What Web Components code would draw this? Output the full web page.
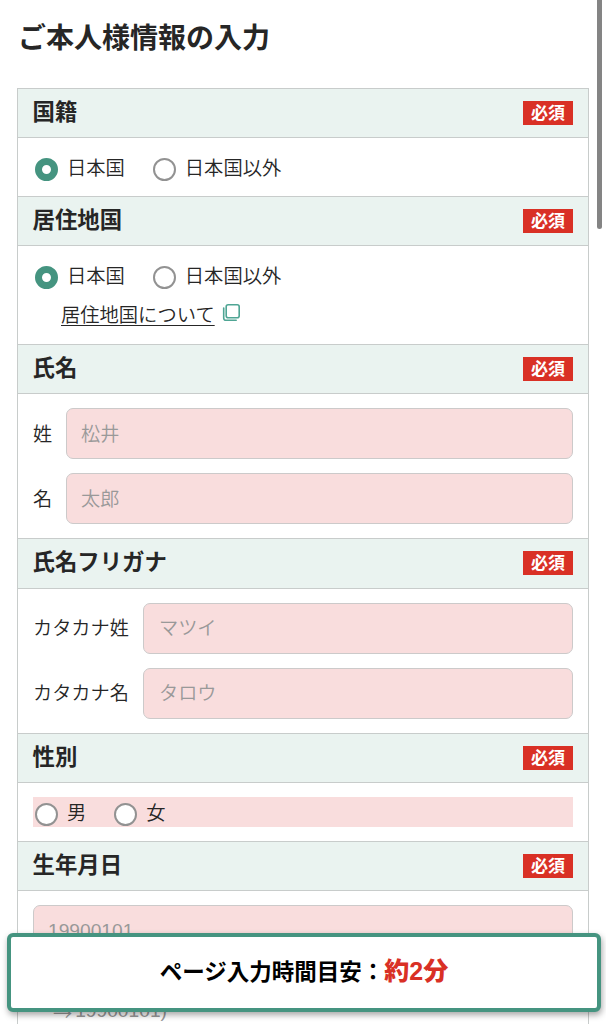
<!DOCTYPE html>
<html lang="ja">
<head>
<meta charset="utf-8">
<title>ご本人様情報の入力</title>
<style>
html,body{margin:0;height:1024px;overflow:hidden;background:#fff}
body{font-family:"Liberation Sans","Noto Sans CJK JP",sans-serif;color:#262626}
</style>
</head>
<body>
<entry-page></entry-page>
<script>
const define = (name, html) => customElements.define(name, class extends HTMLElement {
  constructor() {
    super();
    const t = document.createElement('template');
    t.innerHTML = html;
    this.attachShadow({mode: 'open'}).append(t.content.cloneNode(true));
  }
});

define('required-badge', `<style>
:host{display:flex;align-items:center;justify-content:center;width:50px;height:24px;box-sizing:border-box;padding-top:2px;margin-bottom:1px;background:#d93025;color:#fff;font-size:17px;font-weight:700;line-height:22px}
</style><span>必須</span>`);

define('form-section', `<style>
:host{display:flex;flex-direction:column;height:var(--h);box-sizing:border-box}
header{display:flex;justify-content:space-between;align-items:center;flex:none;height:var(--head,49px);box-sizing:border-box;border-top:1px solid #c8cccb;background:#eaf3f0;padding:0 15px 0 14.5px}
h2{margin:0 0 1px;font-size:22.4px;line-height:30px;font-weight:700}
.body{flex:1;min-height:0;border-top:1px solid #c8cccb;padding:14px 15px 0;box-sizing:border-box}
</style><header><h2><slot name="title"></slot></h2><required-badge></required-badge></header><div class="body"><slot></slot></div>`);

define('radio-group', `<style>
:host{display:flex;align-items:center;height:30px;gap:28px;padding-left:2px;box-sizing:border-box}
:host([missing]){background:#f9dddd}
</style><slot></slot>`);

define('radio-option', `<style>
:host{display:flex;align-items:center;gap:9px;font-size:19.3px;line-height:28px;font-weight:350}
i{width:23px;height:23px;box-sizing:border-box;border:2px solid #929292;border-radius:50%;background:#fff;margin-top:4px}
:host([checked]) i{border:7px solid #459480}
span{padding-top:3px}
</style><i></i><span><slot></slot></span>`);

define('help-link', `<style>
:host{display:flex;align-items:flex-start;gap:7px;padding-left:28px;margin-top:12px;font-size:19.3px;line-height:28px;font-weight:350}
a{color:inherit;text-decoration:underline;text-decoration-thickness:1px;text-underline-offset:3px}
svg{display:block;margin-top:1px}
</style><a><slot></slot></a><svg width="19" height="20" viewBox="0 0 19 20" fill="none" stroke="#4fa594" stroke-width="1.6"><rect x="4.2" y="1.8" width="13" height="13" rx="2"/><path d="M1.7 5v9.9q0 2.3 2.3 2.3h10.2" stroke-linecap="round"/></svg>`);

define('text-field', `<style>
:host{display:flex;align-items:center;font-size:19.2px;font-weight:350;height:51px;margin-bottom:14px}
label{flex:none;width:var(--label,33px);line-height:28px;padding-top:var(--drop,2px)}
div{flex:1;height:51px;box-sizing:border-box;border:1px solid #cccaca;border-radius:7px;background:#f9dddd;color:#999;padding:0 var(--inset,14px);line-height:var(--line,51px)}
</style><label><slot name="label"></slot></label><div><slot></slot></div>`);

define('time-notice', `<style>
:host{position:absolute;left:7px;top:933px;width:594px;height:79px;box-sizing:border-box;border:4px solid #459480;border-radius:6px;background:#fff;box-shadow:1px 3px 6px rgba(0,0,0,.35);display:flex;align-items:center;justify-content:center;font-size:22.5px;font-weight:700;color:#000;line-height:34px;padding-bottom:1px}
b{color:#d93025;font-size:25px}
</style><span><slot></slot><b><slot name="time"></slot></b></span>`);

define('scroll-thumb', `<style>
:host{position:absolute;left:597px;top:-4px;width:5px;height:233px;border-radius:3px;background:#848484}
</style>`);

define('field-hint', `<style>
:host{display:flex;gap:3px;padding:29px 0 0 20px;font-size:19.2px;line-height:24px;color:#999;font-weight:350}
.arrow{font-family:"Noto Sans CJK JP",sans-serif;padding-top:2px}
</style><span class="arrow">→</span><span><slot></slot></span>`);

define('entry-page', `<style>
:host{display:block;position:relative;width:606px;height:1024px;overflow:hidden}
h1{margin:0;padding:19px 0 0 18px;height:88px;box-sizing:border-box;font-size:28px;line-height:40px;font-weight:700}
main{margin:0 17px;border:solid #c8cccb;border-width:0 1px;height:936px;box-sizing:border-box}
</style>
<h1>ご本人様情報の入力</h1>
<main>
<form-section style="--h:108px"><span slot="title">国籍</span><radio-group><radio-option checked>日本国</radio-option><radio-option>日本国以外</radio-option></radio-group></form-section>
<form-section style="--h:148px"><span slot="title">居住地国</span><radio-group><radio-option checked>日本国</radio-option><radio-option>日本国以外</radio-option></radio-group><help-link>居住地国について</help-link></form-section>
<form-section style="--h:194px"><span slot="title">氏名</span><text-field><span slot="label">姓</span>松井</text-field><text-field><span slot="label">名</span>太郎</text-field></form-section>
<form-section style="--h:195px;--head:50px;--label:110px;--inset:15px;--line:49px;--drop:0px"><span slot="title">氏名フリガナ</span><text-field><span slot="label">カタカナ姓</span>マツイ</text-field><text-field><span slot="label">カタカナ名</span>タロウ</text-field></form-section>
<form-section style="--h:108px"><span slot="title">性別</span><radio-group missing><radio-option>男</radio-option><radio-option>女</radio-option></radio-group></form-section>
<form-section style="--h:183px;--label:0px;--line:49px"><span slot="title">生年月日</span><text-field>19900101</text-field><field-hint>19900101)</field-hint></form-section>
</main>
<scroll-thumb></scroll-thumb>
<time-notice>ページ入力時間目安：<span slot="time">約2分</span></time-notice>`);
</script>
</body>
</html>
